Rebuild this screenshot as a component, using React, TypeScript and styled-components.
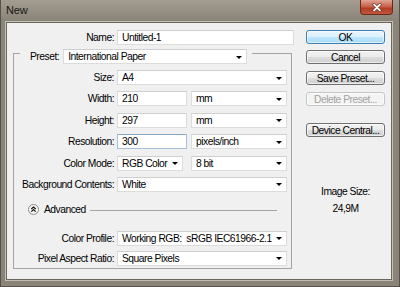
import React from 'react';
import styled, { createGlobalStyle } from 'styled-components';

const Global = createGlobalStyle`
  html, body { margin: 0; padding: 0; background: #8a8478; }
  body { width: 400px; height: 287px; overflow: hidden; font-family: "Liberation Sans", Arial, sans-serif; }
  * { box-sizing: border-box; }
`;

const Window = styled.div`
  width: 400px;
  height: 287px;
  display: flex;
  flex-direction: column;
  background: linear-gradient(#a39d91, #8b8579 20px, #8a8478);
  border-left: 1px solid #55514a;
  border-right: 1px solid #55514a;
  border-bottom: 1px solid #55514a;
  padding: 0 7px 6px 5px;
`;

const TitleBar = styled.div`
  height: 22px;
  flex: none;
  display: flex;
  justify-content: space-between;
  align-items: flex-start;
  margin-right: -1px;
`;

const Title = styled.div`
  padding: 4px 0 0 0;
  font-size: 11px;
  color: #151515;
  letter-spacing: -0.2px;
`;

const Close = styled.div`
  width: 33px;
  height: 15px;
  display: flex;
  align-items: center;
  justify-content: center;
  background: linear-gradient(#e0a594, #c9644d 45%, #b03d24 60%, #c2563d);
  border: 1px solid #6d2a1b;
  border-top: none;
  border-radius: 0 0 4px 4px;
`;

const Content = styled.div`
  flex: 1;
  background: #f0f0f0;
  border: 1px solid #6c675d;
  box-shadow: 0 0 0 1px #c4bfb5;
  display: grid;
  grid-template-columns: 281px 79px;
  column-gap: 12px;
  align-items: start;
  padding: 7px 6px 0 6px;
  font-size: 10.3px;
  letter-spacing: -0.5px;
  color: #000;
`;

const LeftArea = styled.div`
  display: flex;
  flex-direction: column;
`;

const NameRow = styled.div`
  display: grid;
  grid-template-columns: 101px 177px;
  column-gap: 3px;
  align-items: center;
`;

const Label = styled.label`
  text-align: right;
  white-space: nowrap;
  line-height: 15px;
`;

const Field = styled.div<{ $focus?: boolean }>`
  height: 15px;
  background: #fff;
  border: 1px solid ${p => (p.$focus ? '#a7c0d9' : '#dcdcdc')};
  border-top-color: ${p => (p.$focus ? '#8aa9c9' : '#cfcfcf')};
  padding-left: 4px;
  line-height: 13px;
  white-space: nowrap;
  overflow: hidden;
`;

const Select = styled.div`
  height: 15px;
  background: #fff;
  border: 1px solid #dcdcdc;
  border-top-color: #cfcfcf;
  padding: 0 4px 0 4px;
  display: flex;
  align-items: center;
  justify-content: space-between;
  white-space: pre;
  overflow: hidden;
`;

const Arrow = styled.span`
  flex: none;
  width: 0;
  height: 0;
  border-left: 3px solid transparent;
  border-right: 3px solid transparent;
  border-top: 3px solid #000;
  margin-top: 1px;
`;

const Group = styled.div`
  margin-top: 8px;
  width: 279px;
  border: 1px solid #a4a4a4;
  padding: 0 4px 2px 0;
  display: flex;
  flex-direction: column;
`;

const GroupHeader = styled.div`
  align-self: flex-start;
  margin: -5px 0 0 6px;
  padding: 0 5px 0 10px;
  background: #f0f0f0;
  display: flex;
  align-items: center;
  gap: 4px;
`;

const PresetBox = styled.div`
  width: 184px;
`;

const FormGrid = styled.div<{ $gap: number; $top: number }>`
  display: grid;
  grid-template-columns: 100px 170px;
  column-gap: 3px;
  row-gap: ${p => p.$gap}px;
  margin-top: ${p => p.$top}px;
  align-items: center;
`;

const Pair = styled.div<{ $first: number; $gap: number }>`
  display: grid;
  grid-template-columns: ${p => p.$first}px 96px;
  column-gap: ${p => p.$gap}px;
`;

const AdvancedRow = styled.div`
  display: flex;
  align-items: center;
  margin-top: 12px;
  padding-left: 14px;
  height: 12px;
`;

const AdvText = styled.span`
  margin-left: 5px;
`;

const Rule = styled.div`
  flex: 1;
  height: 1px;
  background: #a4a4a4;
  margin: 1px 10px 0 4px;
`;

const RightCol = styled.div`
  display: flex;
  flex-direction: column;
  align-items: stretch;
`;

const Button = styled.div<{ $top?: number; $default?: boolean; $disabled?: boolean }>`
  margin-top: ${p => p.$top ?? 0}px;
  height: 14px;
  display: flex;
  align-items: center;
  justify-content: center;
  border-radius: 3px;
  border: 1px solid ${p => (p.$default ? '#3c80b3' : p.$disabled ? '#c2c6c9' : '#707070')};
  background: ${p =>
    p.$default
      ? 'linear-gradient(#eaf6fd, #d9f0fc 50%, #bee6fd 51%, #a7d9f5)'
      : p.$disabled
      ? '#f4f4f4'
      : 'linear-gradient(#f2f2f2, #ebebeb 50%, #dddddd 51%, #cfcfcf)'};
  color: ${p => (p.$disabled ? '#a3a3a3' : '#000')};
  box-shadow: inset 0 0 0 1px rgba(255, 255, 255, 0.6);
`;

const Info = styled.div<{ $top: number }>`
  margin-top: ${p => p.$top}px;
  text-align: center;
  line-height: 12px;
`;

function AdvIcon() {
  return (
    <svg width="11" height="11" viewBox="0 0 11 11">
      <circle cx="5.5" cy="5.5" r="5" fill="#f6f6f6" stroke="#8c8c8c" />
      <path d="M3.3 5 L5.5 3 L7.7 5 M3.3 7.6 L5.5 5.6 L7.7 7.6" fill="none" stroke="#111" strokeWidth="1.2" />
    </svg>
  );
}

function CloseIcon() {
  return (
    <svg width="10" height="9" viewBox="0 0 10 9">
      <path d="M2 1.5 L8 7.5 M8 1.5 L2 7.5" stroke="#5a1a0e" strokeWidth="3" strokeLinecap="round" />
      <path d="M2 1.5 L8 7.5 M8 1.5 L2 7.5" stroke="#fff" strokeWidth="1.8" strokeLinecap="round" />
    </svg>
  );
}

function Dropdown({ value }: { value: string }) {
  return (
    <Select>
      <span>{value}</span>
      <Arrow />
    </Select>
  );
}

export default function App() {
  return (
    <>
      <Global />
      <Window>
        <TitleBar>
          <Title>New</Title>
          <Close>
            <CloseIcon />
          </Close>
        </TitleBar>
        <Content>
          <LeftArea>
            <NameRow>
              <Label>Name:</Label>
              <Field>Untitled-1</Field>
            </NameRow>
            <Group>
              <GroupHeader>
                <Label>Preset:</Label>
                <PresetBox>
                  <Dropdown value="International Paper" />
                </PresetBox>
              </GroupHeader>
              <FormGrid $gap={6.4} $top={6}>
                <Label>Size:</Label>
                <Dropdown value="A4" />
                <Label>Width:</Label>
                <Pair $first={70} $gap={4}>
                  <Field>210</Field>
                  <Dropdown value="mm" />
                </Pair>
                <Label>Height:</Label>
                <Pair $first={70} $gap={4}>
                  <Field>297</Field>
                  <Dropdown value="mm" />
                </Pair>
                <Label>Resolution:</Label>
                <Pair $first={70} $gap={4}>
                  <Field $focus>300</Field>
                  <Dropdown value="pixels/inch" />
                </Pair>
                <Label>Color Mode:</Label>
                <Pair $first={66} $gap={8}>
                  <Dropdown value="RGB Color" />
                  <Dropdown value="8 bit" />
                </Pair>
                <Label>Background Contents:</Label>
                <Dropdown value="White" />
              </FormGrid>
              <AdvancedRow>
                <AdvIcon />
                <AdvText>Advanced</AdvText>
                <Rule />
              </AdvancedRow>
              <FormGrid $gap={5} $top={15}>
                <Label>Color Profile:</Label>
                <Dropdown value="Working RGB:  sRGB IEC61966-2.1" />
                <Label>Pixel Aspect Ratio:</Label>
                <Dropdown value="Square Pixels" />
              </FormGrid>
            </Group>
          </LeftArea>
          <RightCol>
            <Button $default>OK</Button>
            <Button $top={6}>Cancel</Button>
            <Button $top={7}>Save Preset...</Button>
            <Button $top={7} $disabled>Delete Preset...</Button>
            <Button $top={17}>Device Central...</Button>
            <Info $top={49}>Image Size:</Info>
            <Info $top={5}>24,9M</Info>
          </RightCol>
        </Content>
      </Window>
    </>
  );
}
